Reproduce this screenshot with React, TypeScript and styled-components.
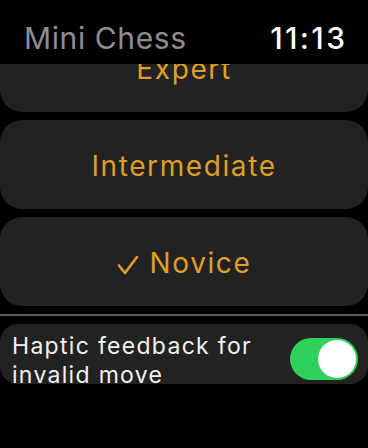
import React from "react";
import styled, { createGlobalStyle } from "styled-components";

const Global = createGlobalStyle`
  html, body { margin: 0; padding: 0; background: #000; }
  body { font-family: Inter, "Noto Sans", sans-serif; -webkit-font-smoothing: antialiased; }
`;

const Screen = styled.div`
  width: 368px;
  height: 448px;
  background: #000;
  display: flex;
  flex-direction: column;
  overflow: hidden;
`;

const Header = styled.header`
  height: 64px;
  flex: none;
  display: flex;
  align-items: flex-end;
  justify-content: space-between;
  padding: 0 23px 11px 24px;
  box-sizing: border-box;
  background: #000;
  position: relative;
  z-index: 1;
`;

const Title = styled.div`
  font-size: 30px;
  color: #8e8e8e;
  line-height: 1;
  letter-spacing: 0.6px;
`;

const Clock = styled.div`
  font-size: 30px;
  font-weight: 500;
  color: #fff;
  line-height: 1;
  letter-spacing: 2.4px;
  margin-right: -2.4px;
`;

const Viewport = styled.div`
  flex: 1;
  overflow: hidden;
`;

const List = styled.div`
  display: flex;
  flex-direction: column;
  gap: 8px;
  margin-top: -41px;
`;

const Option = styled.div`
  height: 89px;
  border-radius: 22px;
  background: #222222;
  display: flex;
  align-items: center;
  justify-content: center;
  gap: 11px;
  color: #df9f26;
  font-size: 28px;
  letter-spacing: 1.6px;
  padding-top: 2px;
  box-sizing: border-box;
`;

const Check = styled.svg`
  width: 22px;
  height: 22px;
  margin-top: 4px;
`;

const Separator = styled.div`
  height: 2px;
  background: #5c5c5c;
`;

const ToggleCard = styled.div`
  height: 60px;
  border-radius: 18px;
  background: #222222;
  display: flex;
  align-items: flex-start;
  justify-content: space-between;
  overflow: hidden;
  padding: 8px 10px 0 12px;
  box-sizing: border-box;
`;

const ToggleLabel = styled.div`
  color: #f2f2f2;
  font-size: 23px;
  line-height: 29px;
  letter-spacing: 1.3px;
`;

const Switch = styled.div<{ $on: boolean }>`
  flex: none;
  width: 68px;
  height: 42px;
  border-radius: 21px;
  background: ${(p) => (p.$on ? "#2fd15c" : "#3a3a3a")};
  margin-top: 6px;
  display: flex;
  align-items: center;
  justify-content: ${(p) => (p.$on ? "flex-end" : "flex-start")};
  padding: 2px;
  box-sizing: border-box;
`;

const Knob = styled.div`
  width: 38px;
  height: 38px;
  border-radius: 50%;
  background: #fff;
`;

export default function App() {
  return (
    <Screen>
      <Global />
      <Header>
        <Title>Mini Chess</Title>
        <Clock>11:13</Clock>
      </Header>
      <Viewport>
        <List>
          <Option>Expert</Option>
          <Option>Intermediate</Option>
          <Option>
            <Check viewBox="0 0 22 22" fill="none">
              <path d="M2 11.5 L8 19 L20 3" stroke="#df9f26" strokeWidth="2.6" strokeLinecap="round" strokeLinejoin="round" />
            </Check>
            Novice
          </Option>
          <Separator />
          <ToggleCard>
            <ToggleLabel>
              Haptic feedback for
              <br />
              invalid move
            </ToggleLabel>
            <Switch $on>
              <Knob />
            </Switch>
          </ToggleCard>
        </List>
      </Viewport>
    </Screen>
  );
}
